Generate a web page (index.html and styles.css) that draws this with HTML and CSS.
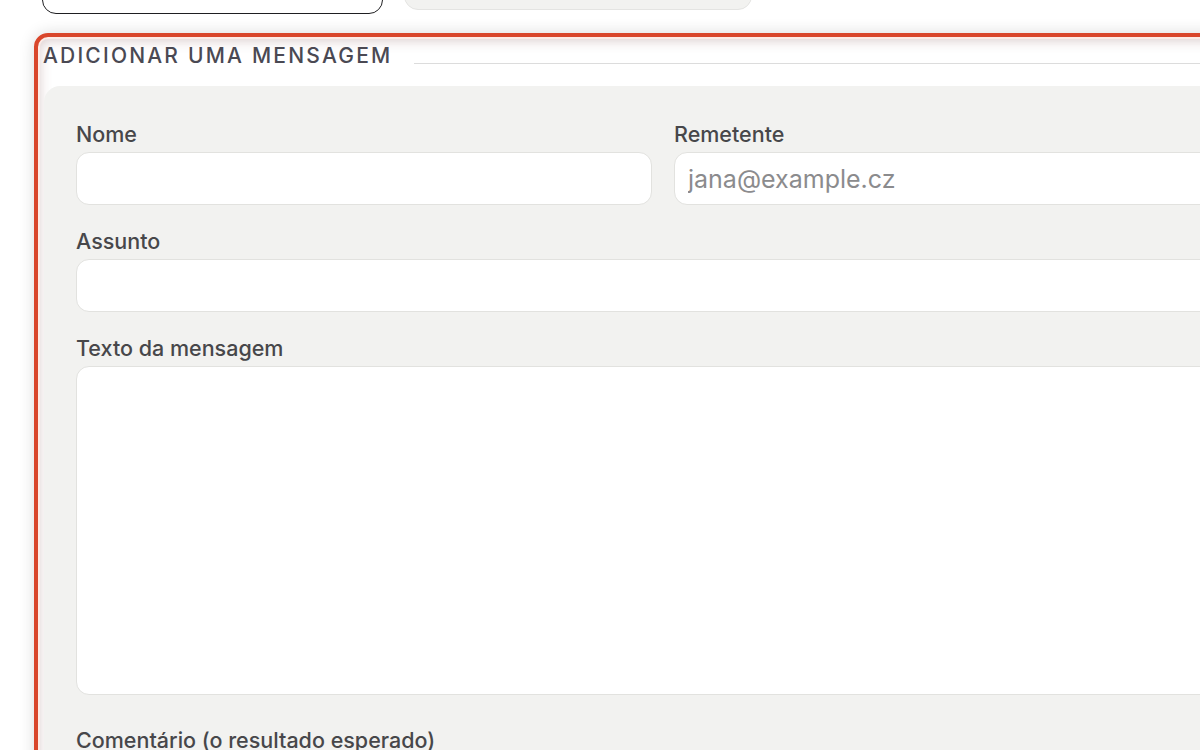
FILE: index.html
```html
<!DOCTYPE html>
<html lang="pt">
<head>
<meta charset="utf-8">
<title>Adicionar uma mensagem</title>
<link rel="stylesheet" href="styles.css">
</head>
<body>
<div class="toprow">
  <button class="btn btn-outline" type="button"></button>
  <button class="btn btn-soft" type="button"></button>
</div>
<section class="card">
  <div class="legend-row">
    <h2 class="legend">Adicionar uma mensagem</h2>
    <div class="rule"></div>
  </div>
  <div class="panel">
    <div class="grid">
      <div class="field">
        <label class="label" for="nome">Nome</label>
        <input class="input" id="nome" type="text">
      </div>
      <div class="field">
        <label class="label" for="rem">Remetente</label>
        <input class="input" id="rem" type="email" placeholder="jana@example.cz">
      </div>
      <div class="field span2">
        <label class="label" for="ass">Assunto</label>
        <input class="input" id="ass" type="text">
      </div>
      <div class="field span2">
        <label class="label" for="txt">Texto da mensagem</label>
        <textarea class="input textarea" id="txt"></textarea>
      </div>
      <div class="field span2 spaced">
        <label class="label" for="com">Comentário (o resultado esperado)</label>
        <textarea class="input textarea" id="com"></textarea>
      </div>
    </div>
  </div>
</section>
</body>
</html>
```
FILE: styles.css
```css
html, body {
  margin: 0;
  padding: 0;
  background: #ffffff;
  overflow: hidden;
  width: 1200px;
  height: 750px;
}
body {
  font-family: Inter, "Noto Sans", sans-serif;
  color: #47474a;
}
.toprow {
  display: flex;
  height: 13px;
  margin-left: 42px;
  gap: 21px;
  align-items: flex-end;
}
.btn {
  display: block;
  height: 40px;
  flex: none;
  padding: 0;
  font: inherit;
}
.btn-outline {
  width: 341px;
  margin-bottom: -1px;
  border: 1px solid #1f1f22;
  border-radius: 14px;
  background: #ffffff;
}
.btn-soft {
  width: 348px;
  margin-bottom: 3px;
  border: 1px solid #e4e4e2;
  border-radius: 14px;
  background: #f2f2f0;
}
.card {
  width: 1320px;
  height: 800px;
  margin: 20px 0 0 34px;
  border: 4px solid #d9462b;
  border-radius: 14px;
  box-shadow: 0 0 16px rgba(0, 0, 0, 0.14),
    inset 0 0 0 2px #fdebe6,
    inset 0 2px 12px 2px rgba(140, 95, 95, 0.3);
  box-sizing: border-box;
}
.legend-row {
  display: flex;
  align-items: flex-end;
  padding: 7px 0 0 5px;
}
.legend {
  margin: 0;
  font-size: 21px;
  line-height: 24px;
  font-weight: 500;
  letter-spacing: 2.2px;
  text-transform: uppercase;
  color: #4a4953;
}
.rule {
  flex: 1;
  margin: 0 0 4px 22px;
  border-top: 1px solid #dcdcdc;
}
.panel {
  margin: 18px 0 0 6px;
  padding: 34px 0 0 32px;
  background: #f2f2f0;
  border-top-left-radius: 16px;
  height: 700px;
}
.grid {
  display: grid;
  grid-template-columns: 576px 576px;
  column-gap: 22px;
  row-gap: 22px;
}
.field {
  display: flex;
  flex-direction: column;
  gap: 4px;
}
.span2 {
  grid-column: 1 / span 2;
}
.spaced {
  margin-top: 9px;
}
.label {
  font-size: 21.5px;
  line-height: 28px;
  font-weight: 500;
  color: #47474a;
}
.input {
  box-sizing: border-box;
  height: 53px;
  margin: 0;
  padding: 0 13px;
  border: 1px solid #e2e2df;
  border-radius: 13px;
  background: #ffffff;
  font-family: Inter, "Noto Sans", sans-serif;
  font-size: 25px;
  font-weight: 400;
  color: #333333;
  outline: none;
}
.input::placeholder {
  color: #8b8b8d;
}
.textarea {
  height: 329px;
  resize: none;
  display: block;
}
```
